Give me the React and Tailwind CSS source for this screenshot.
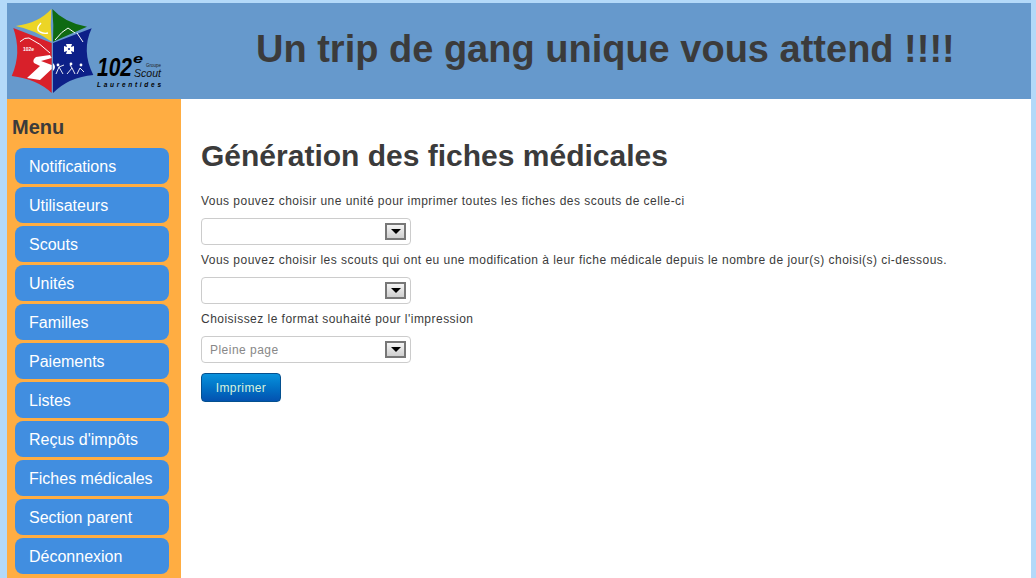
const menuItems = [
  "Notifications",
  "Utilisateurs",
  "Scouts",
  "Unités",
  "Familles",
  "Paiements",
  "Listes",
  "Reçus d'impôts",
  "Fiches médicales",
  "Section parent",
  "Déconnexion",
];

function Logo() {
  return (
    <svg width="160" height="96" viewBox="0 0 160 96" className="shrink-0">
      {/* coordinates are offset by 7,3 from the page */}
      <path d="M44.3 6 Q43 22 44.7 38.7 Q28 27 8.7 23 Q32 20 44.3 6Z" fill="#ecd526" />
      <path d="M45.3 6 Q58 20 80 23.7 L46 38.7 Q47 22 45.3 6Z" fill="#0f6a12" />
      <path d="M6.3 25 L44.7 40 L44.7 90 Q30 76 4.7 73 Q15 50 6.3 25Z" fill="#d8202a" />
      <path d="M84.7 25.3 Q74 48 86.3 72 Q62 74 46 90 L46 40Z" fill="#0d2088" />
      <path d="M13 38.7 Q18 34 22 35 Q33 40 43 50" fill="none" stroke="#fff" strokeWidth="1" />
      <path d="M48 37 Q55 28 61 25 L68 30" fill="none" stroke="#fff" strokeWidth="1" />
      <path d="M70 30 L76 39" fill="none" stroke="#fff" strokeWidth="1" />
      <path d="M34 20 Q28 26 33 29 Q37 31 41 30" fill="none" stroke="#fff" strokeWidth="1.4" />
      <path d="M43 52 L29 54 Q25 57 27 60 L33 63 L20 75 L33 77 L44.7 66 L44.7 62 L34 58 L44.7 55Z" fill="#fff" />
      <path d="M59 41 h6 l-1 3 l3 -1 v6 l-3 -1 l1 3 h-6 l1 -3 l-3 1 v-6 l3 1Z" fill="#fff" />
      <circle cx="62" cy="46" r="1" fill="#0d2088" />
      <path d="M49 71 l3 -7 l4 7 M52 64 l5 -2 M60 71 l5 -6 l3 6 M65 65 l-2 -3 M70 71 l3 -6 l4 4" fill="none" stroke="#fff" strokeWidth="0.9" />
      <circle cx="51" cy="62" r="1.4" fill="#fff" />
      <circle cx="64" cy="61" r="1.4" fill="#fff" />
      <circle cx="74" cy="62" r="1.4" fill="#fff" />
      <path d="M46 60 Q50 64 46 68Z" fill="#fff" />
      <text x="16" y="48" fontSize="5" fontWeight="700" fill="#fff" fontFamily="Liberation Sans, sans-serif">
        102e
      </text>
      <text x="90" y="73" fontSize="25" fontWeight="700" fontStyle="italic" fill="#000" fontFamily="Liberation Sans, sans-serif" textLength="35" lengthAdjust="spacingAndGlyphs">
        102
      </text>
      <text x="126" y="60" fontSize="13" fontWeight="700" fontStyle="italic" fill="#000" fontFamily="Liberation Sans, sans-serif" textLength="10" lengthAdjust="spacingAndGlyphs">
        e
      </text>
      <text x="139" y="64" fontSize="4.5" fill="#222" fontFamily="Liberation Sans, sans-serif" textLength="15" lengthAdjust="spacingAndGlyphs">
        Groupe
      </text>
      <text x="127" y="74" fontSize="10" fontStyle="italic" fill="#111" fontFamily="Liberation Sans, sans-serif" textLength="27" lengthAdjust="spacingAndGlyphs">
        Scout
      </text>
      <text x="90" y="84" fontSize="6.5" fontWeight="700" fontStyle="italic" fill="#000" fontFamily="Liberation Sans, sans-serif" textLength="64">
        Laurentides
      </text>
    </svg>
  );
}

function FakeSelect({ value }) {
  return (
    <div className="flex h-[27px] w-[210px] items-center justify-between rounded-[4px] border border-[#ccc] bg-white pl-2 pr-1">
      <span className="text-xs text-[#888]">{value}</span>
      <span className="flex h-[17px] w-[21px] items-center justify-center border-2 border-[#777] bg-gradient-to-b from-[#f4f4f4] to-[#cfcfcf]">
        <span className="h-0 w-0 border-x-[5px] border-t-[5px] border-x-transparent border-t-black" />
      </span>
    </div>
  );
}

export default function App() {
  return (
    <div className="flex h-screen flex-col overflow-hidden bg-[#b3d9f9] pl-[7px] pr-[5px] pt-[3px] font-['Liberation_Sans',Arial,sans-serif] text-[#3b3b3b]">
      <header className="flex h-[96px] shrink-0 bg-[#6699cc]">
        <Logo />
        <h1 className="ml-[89px] mt-[23px] text-[38px] font-bold leading-[46px]">
          Un trip de gang unique vous attend !!!!
        </h1>
      </header>

      <div className="flex min-h-0 flex-1">
        <aside className="w-[174px] shrink-0 bg-[#ffad42] pl-[8px] pt-[16px]">
          <h2 className="-ml-[3px] mb-[9px] text-xl font-bold leading-[24px]">Menu</h2>
          <nav className="flex flex-col gap-[3px]">
            {menuItems.map((item) => (
              <a
                key={item}
                className="flex h-[36px] w-[154px] items-center rounded-lg bg-[#418ee0] pl-[14px] pt-[2px] text-base text-white"
              >
                {item}
              </a>
            ))}
          </nav>
        </aside>

        <main className="flex-1 bg-white pl-[20px] pt-[38px]">
          <h2 className="text-[30px] font-bold leading-[38px]">Génération des fiches médicales</h2>
          <div className="mt-[17px] flex flex-col items-start text-xs tracking-[0.47px]">
            <p className="mb-[8px] leading-[18px]">
              Vous pouvez choisir une unité pour imprimer toutes les fiches des scouts de celle-ci
            </p>
            <FakeSelect value="" />
            <p className="mb-[8px] mt-[6px] leading-[18px]">
              Vous pouvez choisir les scouts qui ont eu une modification à leur fiche médicale depuis le nombre de jour(s) choisi(s) ci-dessous.
            </p>
            <FakeSelect value="" />
            <p className="mb-[8px] mt-[6px] leading-[18px]">
              Choisissez le format souhaité pour l'impression
            </p>
            <FakeSelect value="Pleine page" />
            <button className="mt-[10px] h-[29px] w-[80px] rounded-[4px] border border-[#04508f] bg-gradient-to-b from-[#0a92dc] to-[#0452b0] text-xs tracking-[0.4px] text-[#d6f2dc]">
              Imprimer
            </button>
          </div>
        </main>
      </div>
    </div>
  );
}
